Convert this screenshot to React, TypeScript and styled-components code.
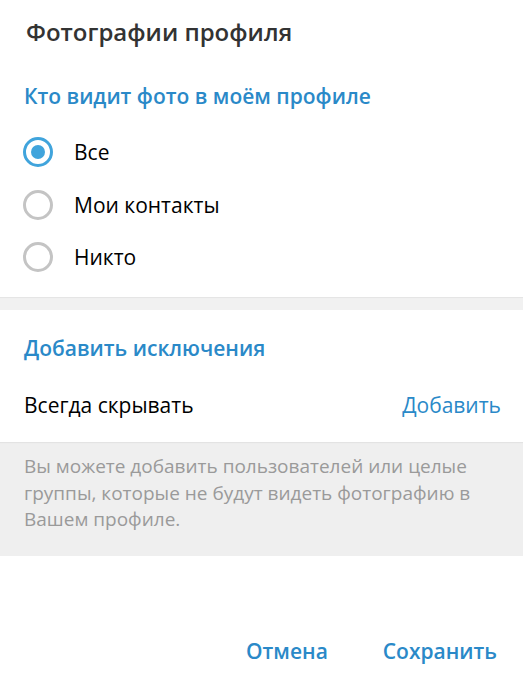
import React, { useState } from 'react';
import styled, { createGlobalStyle } from 'styled-components';

const GlobalStyle = createGlobalStyle`
	body {
		margin: 0;
		background: #ffffff;
		font-family: 'Open Sans', 'Noto Sans', sans-serif;
	}
`;

const Box = styled.div`
	width: 523px;
	height: 681px;
	background: #ffffff;
	display: flex;
	flex-direction: column;
`;

const Title = styled.h1`
	margin: 0;
	height: 62px;
	padding-left: 26px;
	display: flex;
	align-items: center;
	font-size: 24px;
	font-weight: 600;
	color: #333333;
`;

const SectionTitle = styled.h2<{ $top: number }>`
	margin: 0;
	padding: ${({ $top }) => $top}px 24px 0;
	font-size: 21px;
	line-height: 28px;
	font-weight: 600;
	color: #2a89c8;
`;

const Options = styled.div`
	display: flex;
	flex-direction: column;
	padding: 16px 0 13.5px;
`;

const Option = styled.label`
	height: 52.5px;
	display: flex;
	align-items: center;
	gap: 21px;
	padding-left: 23px;
	font-size: 21px;
	color: #000000;
	cursor: pointer;
`;

const Radio = styled.span<{ $checked: boolean }>`
	width: 30px;
	height: 30px;
	box-sizing: border-box;
	border-radius: 50%;
	border: 3px solid ${({ $checked }) => ($checked ? '#40a4dc' : '#c4c4c4')};
	display: flex;
	align-items: center;
	justify-content: center;
	&::after {
		content: '';
		width: 14px;
		height: 14px;
		border-radius: 50%;
		background: #40a4dc;
		display: ${({ $checked }) => ($checked ? 'block' : 'none')};
	}
`;

const Divider = styled.div`
	height: 13px;
	background: #f1f1f1;
	box-shadow: inset 0 2px 1px -1px #e4e4e4;
`;

const Row = styled.div`
	height: 80px;
	box-sizing: border-box;
	padding: 6px 22px 0 24px;
	display: flex;
	align-items: center;
	justify-content: space-between;
	font-size: 21px;
	color: #000000;
`;

const LinkButton = styled.button<{ $bold?: boolean }>`
	border: none;
	background: none;
	padding: 0;
	font-family: inherit;
	font-size: 21px;
	font-weight: ${({ $bold }) => ($bold ? 600 : 400)};
	color: #2a89c8;
	cursor: pointer;
`;

const Note = styled.div`
	background: #efefef;
	box-shadow: inset 0 2px 1px -1px #e2e2e2;
	padding: 11px 24px 23px;
	font-size: 19px;
	line-height: 26.5px;
	color: #9a9a9a;
`;

const Footer = styled.div`
	margin-top: auto;
	height: 60px;
	padding-right: 26px;
	display: flex;
	justify-content: flex-end;
	align-items: center;
	gap: 55px;
`;

const options = ['Все', 'Мои контакты', 'Никто'];

function App() {
	const [selected, setSelected] = useState(0);
	return (
		<Box>
			<GlobalStyle />
			<Title>Фотографии профиля</Title>
			<SectionTitle $top={20}>Кто видит фото в моём профиле</SectionTitle>
			<Options>
				{options.map((label, i) => (
					<Option key={label} onClick={() => setSelected(i)}>
						<Radio $checked={selected === i} />
						{label}
					</Option>
				))}
			</Options>
			<Divider />
			<SectionTitle $top={24}>Добавить исключения</SectionTitle>
			<Row>
				Всегда скрывать
				<LinkButton>Добавить</LinkButton>
			</Row>
			<Note>
				Вы можете добавить пользователей или целые группы, которые не будут
				видеть фотографию в Вашем профиле.
			</Note>
			<Footer>
				<LinkButton $bold>Отмена</LinkButton>
				<LinkButton $bold>Сохранить</LinkButton>
			</Footer>
		</Box>
	);
}

export default App;
